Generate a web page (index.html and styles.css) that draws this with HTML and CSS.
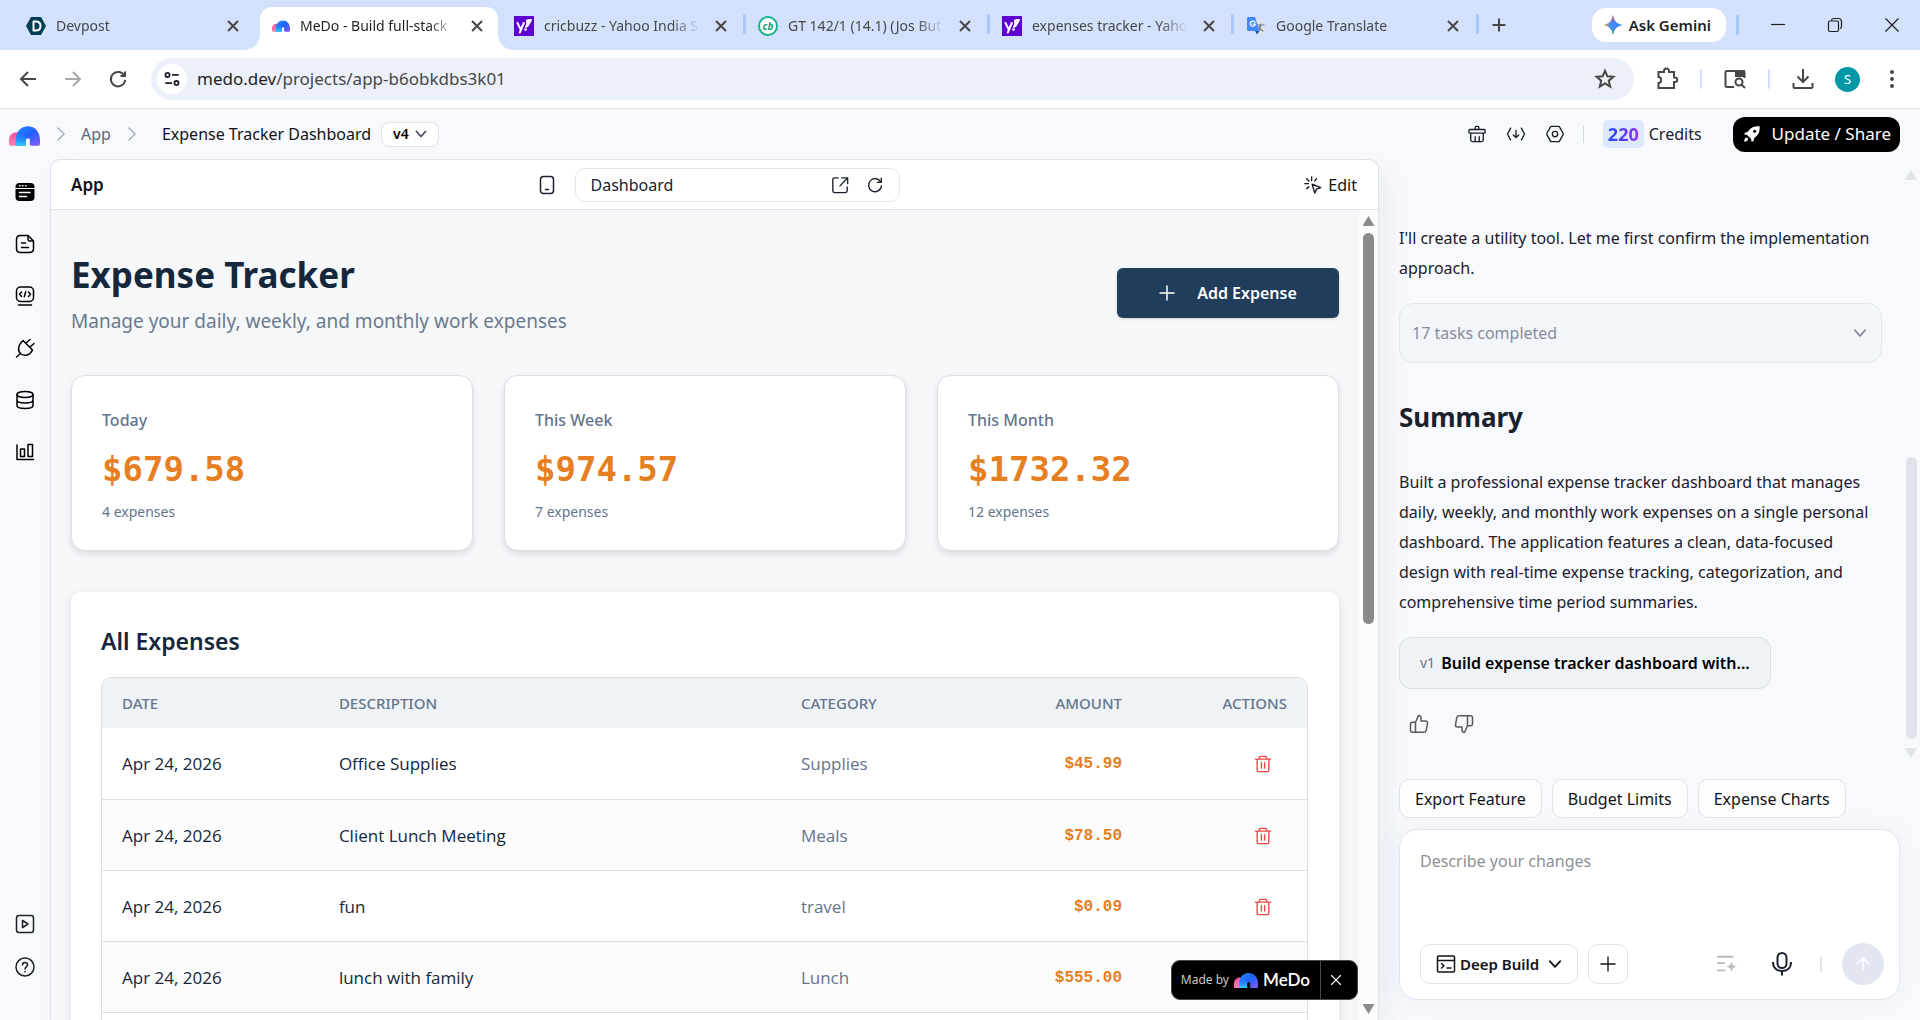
FILE: index.html
```html
<!DOCTYPE html>
<html lang="en">
<head>
<meta charset="utf-8">
<title>MeDo - Build full-stack apps</title>
<link rel="stylesheet" href="styles.css">
</head>
<body>
<svg class="defs" aria-hidden="true">
  <defs>
    <linearGradient id="pink" x1="0" y1="0" x2="0" y2="1"><stop offset="0" stop-color="#ff4fa0"/><stop offset="1" stop-color="#ff7fae"/></linearGradient>
    <linearGradient id="blue" x1="0" y1="0" x2="1" y2="1"><stop offset="0" stop-color="#2b8bff"/><stop offset=".5" stop-color="#1f62ff"/><stop offset="1" stop-color="#8a5af5"/></linearGradient>
    <linearGradient id="cyan" x1="0" y1="0" x2="0" y2="1"><stop offset="0" stop-color="#1c6dff" stop-opacity="0"/><stop offset="1" stop-color="#2fd4ff"/></linearGradient>
    <linearGradient id="gem" x1="0" y1="0" x2="1" y2="0"><stop offset="0" stop-color="#f9b800"/><stop offset=".35" stop-color="#4a8cf7"/><stop offset="1" stop-color="#3186ff"/></linearGradient>
    <linearGradient id="gemv" x1="0" y1="0" x2="0" y2="1"><stop offset="0" stop-color="#ee4d45"/><stop offset=".38" stop-color="#ee4d45" stop-opacity="0"/><stop offset=".62" stop-color="#27a54f" stop-opacity="0"/><stop offset="1" stop-color="#27a54f"/></linearGradient>
    <symbol id="medo" viewBox="0 0 32 20">
      <path d="M2 20c-1.500 0-2-.5-2-2v-3.500C0 9 3.500 6 8 6c3 0 5 2 5 5v9z" fill="url(#pink)"/>
      <path d="M7 20v-6C7 5.500 12.500 0 19.500 0S32 5.500 32 14v4c0 1.500-.5 2-2 2h-6.500c-1.500 0-2-.5-2-2v-4c0-1-.5-1.800-1.500-1.800s-2.500.8-2.500 1.800v6z" fill="url(#blue)"/>
      <path d="M7 20v-6c0-3.500 1-6.500 3-9 5 1 7.500 4.500 7.500 9v6z" fill="url(#cyan)"/>
    </symbol>
    <symbol id="x" viewBox="0 0 16 16"><path d="M3 3l10 10M13 3L3 13"/></symbol>
    <symbol id="yahoo" viewBox="0 0 20 20"><path d="M0 0h20v20H0z" fill="#5f01d1"/><path d="M3.500 7l3.200 6.500M9.800 7L5.800 16.500M12 11l2.700-7M13 4.500l4-.5-3.500 6z" fill="none" stroke="#fff" stroke-width="2"/><circle cx="11.500" cy="13.500" r="1.300" fill="#fff"/></symbol>
    <symbol id="trash" viewBox="0 0 20 20"><path d="M1.500 4.500h17M3.500 4.500V17c0 1 .6 1.500 1.500 1.500h10c1 0 1.500-.6 1.500-1.500V4.500M6 4.500V2.500c0-.6.400-1 1-1h6c.6 0 1 .4 1 1v2M8.200 8.500v6M11.800 8.500v6"/></symbol>
    <symbol id="down" viewBox="0 0 12 12"><path d="M1.500 3.500L6 8.500l4.500-5"/></symbol>
    <symbol id="reload" viewBox="0 0 20 20"><path d="M16.500 7A7.200 7.200 0 1 0 17.200 11M17 2.500V7h-4.500"/></symbol>
  </defs>
</svg>

<header class="browser">
  <div class="tabstrip">
    <nav class="tabs" aria-label="Tabs">
      <div class="tab"><svg class="fav" viewBox="0 0 20 20"><path d="M5 1h10l5 9-5 9H5l-5-9z" fill="#003e54"/><path d="M7.500 5.500h2.500c3 0 4.500 1.800 4.500 4.500s-1.500 4.500-4.500 4.500H7.500z" fill="none" stroke="#fff" stroke-width="2"/></svg><span class="tab-title">Devpost</span><button class="ic bold" aria-label="Close tab"><svg class="s16"><use href="#x"/></svg></button></div>
      <div class="tab active"><svg class="fav medofav"><use href="#medo"/></svg><span class="tab-title">MeDo - Build full-stack</span><button class="ic bold" aria-label="Close tab"><svg class="s16"><use href="#x"/></svg></button></div>
      <div class="tab"><svg class="fav"><use href="#yahoo"/></svg><span class="tab-title">cricbuzz - Yahoo India S</span><button class="ic bold" aria-label="Close tab"><svg class="s16"><use href="#x"/></svg></button></div>
      <div class="tab sep"><span class="cb">cb</span><span class="tab-title">GT 142/1 (14.1) (Jos But</span><button class="ic bold" aria-label="Close tab"><svg class="s16"><use href="#x"/></svg></button></div>
      <div class="tab sep"><svg class="fav"><use href="#yahoo"/></svg><span class="tab-title">expenses tracker - Yaho</span><button class="ic bold" aria-label="Close tab"><svg class="s16"><use href="#x"/></svg></button></div>
      <div class="tab sep end"><svg class="fav" viewBox="0 0 20 20"><path d="M8 5h9.500c1 0 1.500.5 1.500 1.500v11c0 .8-.5 1.500-1.500 1.500H13z" fill="#dcdfe3"/><path d="M11 9h7M14.500 8v1c0 3-1.500 5-3 6M13 11c1 2 2.500 3.500 4 4" fill="none" stroke="#6b7a8f" stroke-width="1.200"/><path d="M2.500 1H9l4.500 14H2.500C1.500 15 1 14.500 1 13.500v-11C1 1.500 1.500 1 2.500 1z" fill="#4688f4"/><path d="M9 15h4.500L11 18.500z" fill="#2250b5"/><path d="M9 6.200A2.600 2.600 0 1 0 9.400 8.200H7" fill="none" stroke="#fff" stroke-width="1.300"/></svg><span class="tab-title">Google Translate</span><button class="ic bold" aria-label="Close tab"><svg class="s16"><use href="#x"/></svg></button></div>
    </nav>
    <button class="ic newtab" aria-label="New tab"><svg class="s16" viewBox="0 0 16 16"><path d="M8 1.500v13M1.500 8h13"/></svg></button>
    <button class="gemini"><svg class="s20" viewBox="0 0 20 20"><path d="M10 0c1 6 4 9 10 10-6 1-9 4-10 10C9 14 6 11 0 10 6 9 9 6 10 0z" fill="url(#gem)"/><path d="M10 0c1 6 4 9 10 10-6 1-9 4-10 10C9 14 6 11 0 10 6 9 9 6 10 0z" fill="url(#gemv)"/></svg>Ask Gemini</button>
    <span class="vsep strong"></span>
    <div class="winctl">
      <button class="ic thin" aria-label="Minimise"><svg class="s16" viewBox="0 0 16 16"><path d="M1 7.500h14"/></svg></button>
      <button class="ic thin" aria-label="Restore"><svg class="s16" viewBox="0 0 16 16"><rect x="1.500" y="4" width="10" height="10.500" rx="1.500"/><path d="M4.500 3.500c0-1.200.8-2 2-2h5c1.800 0 3 1.200 3 3v5c0 1-.6 2-1.600 2"/></svg></button>
      <button class="ic thin" aria-label="Close window"><svg class="s16" viewBox="0 0 16 16"><path d="M1.500 1.500l13 13M14.500 1.500l-13 13"/></svg></button>
    </div>
  </div>
  <div class="toolbar">
    <div class="navbtns">
      <button class="ic" aria-label="Back"><svg class="s20" viewBox="0 0 20 20"><path d="M18 10H3M10 3l-7 7 7 7"/></svg></button>
      <button class="ic off" aria-label="Forward"><svg class="s20" viewBox="0 0 20 20"><path d="M2 10h15M10 3l7 7-7 7"/></svg></button>
      <button class="ic" aria-label="Reload"><svg class="s20"><use href="#reload"/></svg></button>
    </div>
    <div class="omnibox">
      <button class="siteinfo" aria-label="Site information"><svg class="s20" viewBox="0 0 20 20"><circle cx="5" cy="5.500" r="2.300"/><path d="M10 5.500h7.500M2.500 14.500H10"/><circle cx="15" cy="14.500" r="2.300"/></svg></button>
      <p class="url">medo.dev<span>/projects/app-b6obkdbs3k01</span></p>
      <button class="ic" aria-label="Bookmark"><svg class="s20" viewBox="0 0 20 20"><path d="M10 1.800l2.400 5.500 6 .5-4.600 3.900 1.400 5.900-5.200-3.200-5.200 3.200 1.400-5.900L1.600 7.800l6-.5z"/></svg></button>
    </div>
    <div class="exts">
      <button class="ic" aria-label="Extensions"><svg class="s22" viewBox="0 0 22 22"><path d="M2.500 4H8V3a2 2 0 0 1 5 0v1h5v5.500h1a2 2 0 0 1 0 4.500h-1v6H2.500v-5c3.500 0 3.500-6 0-6z"/></svg></button>
      <span class="vsep"></span>
      <button class="ic" aria-label="Search with Lens"><svg class="s22" viewBox="0 0 22 22"><path d="M10 19H3c-1 0-1.500-.5-1.500-1.500v-13C1.500 3.500 2 3 3 3h16c1 0 1.500.5 1.500 1.500V10"/><path d="M12 3h8v5h-8z" fill="currentColor"/><circle cx="15" cy="14" r="3.500"/><path d="M17.500 16.500L21 20"/></svg></button>
      <span class="vsep"></span>
      <button class="ic" aria-label="Downloads"><svg class="s22" viewBox="0 0 22 22"><path d="M11 1v13M5.500 8.500L11 14l5.500-5.500M1.500 15v4c0 .6.400 1 1 1h17c.6 0 1-.4 1-1v-4"/></svg></button>
      <button class="avatar" aria-label="Profile">S</button>
      <button class="ic" aria-label="Menu"><svg class="s22" viewBox="0 0 22 22"><g fill="currentColor" stroke="none"><circle cx="11" cy="4" r="2"/><circle cx="11" cy="11" r="2"/><circle cx="11" cy="18" r="2"/></g></svg></button>
    </div>
  </div>
</header>

<header class="apphead">
  <a class="logo" href="#" aria-label="MeDo home"><svg class="logosvg"><use href="#medo"/></svg></a>
  <svg class="crumb" viewBox="0 0 8 14"><path d="M1 1l6 6-6 6"/></svg>
  <a class="crumblink" href="#">App</a>
  <svg class="crumb" viewBox="0 0 8 14"><path d="M1 1l6 6-6 6"/></svg>
  <span class="projname">Expense Tracker Dashboard</span>
  <button class="version">v4 <svg class="s12"><use href="#down"/></svg></button>
  <div class="headtools">
    <button class="ic dark" aria-label="Clean up"><svg class="s20" viewBox="0 0 20 20"><path d="M8 5V2.500c0-.6.400-1 1-1h2c.6 0 1 .4 1 1V5M2 5h16c.6 0 1 .4 1 1v2c0 .6-.4 1-1 1H2c-.6 0-1-.4-1-1V6c0-.6.400-1 1-1zM3 9v7.500c0 1.200.8 2 2 2h10c1.200 0 2-.8 2-2V9M8 13v5M12.500 13v5"/></svg></button>
    <button class="ic dark" aria-label="Download code"><svg class="s20" viewBox="0 0 20 20"><path d="M4 3.500L.5 10 4 16.500M16 3.500l3.500 6.500-3.500 6.500M10 6v7.500M7 11l3 3 3-3"/></svg></button>
    <button class="ic dark" aria-label="Settings"><svg class="s20" viewBox="0 0 20 20"><path d="M6 1.500h8c.5 0 .8.200 1 .6l4 7.100c.3.500.3 1 0 1.500l-4 7.200c-.2.400-.5.600-1 .6H6c-.5 0-.8-.2-1-.6l-4-7.200c-.3-.5-.3-1 0-1.500l4-7.100c.2-.4.500-.6 1-.6z"/><circle cx="10" cy="10" r="3"/></svg></button>
  </div>
  <span class="headsep"></span>
  <div class="credits"><span class="count"><b>220</b></span>Credits</div>
  <button class="share"><svg class="s18" viewBox="0 0 20 20"><path d="M18.500 1.500C12 1 8 3.500 5.500 7.500L2 8.500l-.5 2 3 .5 4.500 4.500.5 3 2-.5 1-3.500c4-2.500 6.500-6.500 6-13z" fill="#fff"/><path d="M2 15c1.500-2 4-1 3.500 1-.4 1.500-2 2.500-4 2.500 0-1.500 0-2.500.5-3.500z" fill="#fff"/><circle cx="13" cy="7" r="1.700" fill="#000"/></svg>Update / Share</button>
</header>

<div class="workspace">
  <nav class="rail" aria-label="Project">
    <button class="ic black" aria-label="Preview"><svg class="s20" viewBox="0 0 20 20"><rect x=".5" y="1" width="19" height="18" rx="4" fill="#000" stroke="none"/><path d="M.5 6.500h19" stroke="#f8f9fd" stroke-width="1"/><path d="M4.500 3.800h.5M7.500 3.800h.5M10.500 3.800h.5M4.500 10.500h10.500M4.500 14.500h7" stroke="#fff" stroke-width="1.500"/></svg></button>
    <button class="ic black" aria-label="Docs"><svg class="s20" viewBox="0 0 20 20"><path d="M13 1.500H5.500c-2.500 0-4 1.500-4 4v9c0 2.500 1.500 4 4 4h9c2.500 0 4-1.500 4-4V7zM13 1.500V5c0 1.300.7 2 2 2h3.500M6.500 9h4M6.500 13.500h7"/></svg></button>
    <button class="ic black" aria-label="Code"><svg class="s20" viewBox="0 0 20 20"><rect x="1.500" y="1" width="17" height="14.500" rx="4"/><path d="M6.500 6L4.500 8.300l2 2.200M13.500 6l2 2.300-2 2.200M10.700 5.800L9.300 10.700M3.500 19h13"/></svg></button>
    <button class="ic black" aria-label="Plugins"><svg class="s20" viewBox="0 0 20 20"><path d="M8 2.500L17.500 12c-2.500 5.500-8 6.500-11.500 4s-3.500-8.500 2-13.500zM11 5l4-3.500M15 9l4-3.500M5.500 15.500L1.500 19"/></svg></button>
    <button class="ic black" aria-label="Database"><svg class="s20" viewBox="0 0 20 20"><ellipse cx="10" cy="4.500" rx="8" ry="3"/><path d="M2 4.500v11c0 1.700 3.500 3 8 3s8-1.300 8-3v-11M2 10c0 1.700 3.500 3 8 3s8-1.300 8-3"/></svg></button>
    <button class="ic black" aria-label="Analytics"><svg class="s20" viewBox="0 0 20 20"><path d="M2 3v14.500h16.500"/><rect x="5.500" y="7" width="4" height="7.500"/><rect x="13" y="2.500" width="4.500" height="12"/></svg></button>
    <button class="ic dark bottom" aria-label="Tutorials"><svg class="s20" viewBox="0 0 20 20"><rect x="1.500" y="1.500" width="17" height="17" rx="2.500"/><path d="M7.500 6.500l5.500 3.500-5.500 3.500z"/></svg></button>
    <button class="ic dark" aria-label="Help"><svg class="s20" viewBox="0 0 20 20"><circle cx="10" cy="10" r="9"/><path d="M7.500 8c0-3.300 5-3.300 5 0 0 2-2.500 1.800-2.500 4M10 14.500v.5"/></svg></button>
  </nav>

  <main class="preview">
    <div class="prevbar">
      <h2 class="prevname">App</h2>
      <div class="prevmid">
        <button class="ic dark" aria-label="Mobile view"><svg class="s20" viewBox="0 0 20 20"><rect x="3.500" y="1.500" width="13" height="17" rx="3"/><path d="M8.500 14.500h3"/></svg></button>
        <div class="pagebox">
          <span>Dashboard</span>
          <button class="ic dark" aria-label="Open in new tab"><svg class="s18" viewBox="0 0 20 20"><path d="M8 2H4C2.700 2 2 2.700 2 4v12.500c0 1.300.7 2 2 2h12c1.300 0 2-.7 2-2V12M12 2h6.500v6.500M18 2.500L10 11"/></svg></button>
          <button class="ic dark" aria-label="Refresh preview"><svg class="s18"><use href="#reload"/></svg></button>
        </div>
      </div>
      <button class="edit"><svg class="s18" viewBox="0 0 20 20"><path d="M9 9l9.500 4-4.500 1.500L12 19zM8.500 1v4M1 8.500h4M3 3l2.500 2.500M14 3l-2 2.500M3 14l2.500-2"/></svg>Edit</button>
    </div>
    <div class="prevbody">
      <section class="tracker">
        <div class="hero">
          <div>
            <h1>Expense Tracker</h1>
            <p class="sub">Manage your daily, weekly, and monthly work expenses</p>
          </div>
          <button class="add"><svg class="s16" viewBox="0 0 16 16"><path d="M8 1v14M1 8h14"/></svg>Add Expense</button>
        </div>
        <div class="cards">
          <article class="card"><h3>Today</h3><p class="sum">$679.58</p><p class="n">4 expenses</p></article>
          <article class="card"><h3>This Week</h3><p class="sum">$974.57</p><p class="n">7 expenses</p></article>
          <article class="card"><h3>This Month</h3><p class="sum">$1732.32</p><p class="n">12 expenses</p></article>
        </div>
        <section class="expenses">
          <h2>All Expenses</h2>
          <div class="tablewrap">
            <table>
              <colgroup><col class="c1"><col class="c2"><col class="c3"><col class="c4"><col class="c5"></colgroup>
              <thead><tr><th>DATE</th><th>DESCRIPTION</th><th>CATEGORY</th><th class="r">AMOUNT</th><th class="r">ACTIONS</th></tr></thead>
              <tbody>
                <tr><td>Apr 24, 2026</td><td>Office Supplies</td><td class="cat">Supplies</td><td class="amt">$45.99</td><td class="act"><button aria-label="Delete"><svg class="s18"><use href="#trash"/></svg></button></td></tr>
                <tr><td>Apr 24, 2026</td><td>Client Lunch Meeting</td><td class="cat">Meals</td><td class="amt">$78.50</td><td class="act"><button aria-label="Delete"><svg class="s18"><use href="#trash"/></svg></button></td></tr>
                <tr><td>Apr 24, 2026</td><td>fun</td><td class="cat">travel</td><td class="amt">$0.09</td><td class="act"><button aria-label="Delete"><svg class="s18"><use href="#trash"/></svg></button></td></tr>
                <tr><td>Apr 24, 2026</td><td>lunch with family</td><td class="cat">Lunch</td><td class="amt">$555.00</td><td class="act"><button aria-label="Delete"><svg class="s18"><use href="#trash"/></svg></button></td></tr>
                <tr class="last"><td></td><td></td><td></td><td></td><td></td></tr>
              </tbody>
            </table>
          </div>
        </section>
      </section>
      <div class="sbar" aria-hidden="true"><i class="up"></i><i class="thumb"></i><i class="dn"></i></div>
      <div class="madeby">
        <a href="#"><span>Made by</span><svg class="mb"><use href="#medo"/></svg><strong>MeDo</strong></a>
        <button aria-label="Dismiss"><svg class="s12" viewBox="0 0 16 16"><path d="M2 2l12 12M14 2L2 14"/></svg></button>
      </div>
    </div>
  </main>

  <aside class="chat">
    <div class="chatscroll">
      <div class="log">
        <p>I'll create a utility tool. Let me first confirm the implementation approach.</p>
        <button class="tasks">17 tasks completed<svg class="s14" viewBox="0 0 12 12"><path d="M1.500 3.500L6 8.500l4.500-5"/></svg></button>
        <h2>Summary</h2>
        <p>Built a professional expense tracker dashboard that manages daily, weekly, and monthly work expenses on a single personal dashboard. The application features a clean, data-focused design with real-time expense tracking, categorization, and comprehensive time period summaries.</p>
        <button class="build"><small>v1</small><b>Build expense tracker dashboard with...</b></button>
        <div class="votes">
          <button class="ic grey" aria-label="Good response"><svg class="s20" viewBox="0 0 20 20"><path d="M6.500 8.500L9 2.500c.5-1.500 3-1 3 1.200V7h4.500c1.500 0 2.300 1 2 2.400l-1.300 7c-.2 1.200-1 1.900-2.200 1.900H3.500c-1.200 0-2-.8-2-2v-6c0-1.200.8-2 2-2h3zM6.500 8.500v10"/></svg></button>
          <button class="ic grey" aria-label="Bad response"><svg class="s20" viewBox="0 0 20 20"><path d="M13.500 11.500L11 17.500c-.5 1.500-3 1-3-1.200V13H3.500c-1.500 0-2.300-1-2-2.400l1.300-7C3 2.400 3.800 1.700 5 1.700h11.500c1.200 0 2 .8 2 2v6c0 1.200-.8 2-2 2h-3zM13.500 11.500v-10"/></svg></button>
        </div>
      </div>
      <div class="sbar light" aria-hidden="true"><i class="up"></i><i class="thumb"></i><i class="dn"></i></div>
    </div>
    <div class="compose">
      <div class="chips"><button>Export Feature</button><button>Budget Limits</button><button>Expense Charts</button></div>
      <form class="box">
        <textarea aria-label="Describe your changes" placeholder="Describe your changes"></textarea>
        <div class="boxbar">
          <button type="button" class="mode"><svg class="s20" viewBox="0 0 20 20"><rect x="1.500" y="2" width="17" height="16" rx="1"/><path d="M1.500 6.500h17M5.500 9.500l2.500 2.200L5.500 14M11 14h4"/></svg>Deep Build<svg class="s14 caret" viewBox="0 0 12 12"><path d="M1.500 3.500L6 8.500l4.500-5"/></svg></button>
          <button type="button" class="plus" aria-label="Attach"><svg class="s16" viewBox="0 0 18 18"><path d="M9 1v16M1 9h16"/></svg></button>
          <button type="button" class="ic faint" aria-label="Enhance prompt"><svg class="s20" viewBox="0 0 22 22"><path d="M0 3h18M0 10h9M0 18h9"/><path d="M16 8c.7 4 2 5.300 6 6-4 .7-5.300 2-6 6-.7-4-2-5.300-6-6 4-.7 5.300-2 6-6z" fill="currentColor" stroke="none"/></svg></button>
          <button type="button" class="ic mic" aria-label="Voice input"><svg class="s24" viewBox="0 0 24 24"><rect x="7.500" y="1" width="9" height="15" rx="4.500"/><path d="M3 10c0 6 4 9 9 9s9-3 9-9M12 19v4.500"/></svg></button>
          <span class="boxsep"></span>
          <button type="submit" class="send" aria-label="Send"><svg class="s16" viewBox="0 0 20 20"><path d="M10 18V3M3 9.500L10 2.500l7 7"/></svg></button>
        </div>
      </form>
    </div>
  </aside>
</div>
</body>
</html>
```

FILE: styles.css
```css
* { box-sizing: border-box; margin: 0; padding: 0; }
body {
  height: 100vh;
  display: flex;
  flex-direction: column;
  overflow: hidden;
  background: #f8f9fd;
  color: #1a202c;
  font: 16px/24px "Noto Sans", "Open Sans", sans-serif;
}
button { font: inherit; color: inherit; background: none; border: 0; }
a { color: inherit; text-decoration: none; }
svg { display: block; flex: none; fill: none; stroke: currentColor; stroke-width: 1.5; stroke-linecap: round; stroke-linejoin: round; overflow: visible; }
.defs { position: absolute; width: 0; height: 0; }
.s12 { width: 12px; height: 12px; }
.s14 { width: 14px; height: 14px; }
.s16 { width: 16px; height: 16px; }
.s18 { width: 18px; height: 18px; }
.s20 { width: 20px; height: 20px; }
.s22 { width: 22px; height: 22px; }
.s24 { width: 24px; height: 24px; }
.ic { display: grid; place-items: center; color: #474747; }
.ic svg { stroke-width: 2; stroke-linecap: butt; stroke-linejoin: miter; }
.ic.dark svg, .ic.black svg, .ic.grey svg { stroke-width: 1.5; stroke-linecap: round; stroke-linejoin: round; }
.ic.dark { color: #1a202c; }
.ic.black { color: #000; }
.ic.grey { color: #57595e; }
.ic.off { color: #a8a8a8; }
.ic.thin { color: #1f1f1f; }
.ic.thin svg { stroke-width: 1.2; }

/* Browser frame */
.tabstrip { display: flex; align-items: center; height: 50px; padding-left: 16px; background: #d3e1fd; }
.tabs { display: flex; gap: 6px; align-self: stretch; padding-top: 7px; }
.tab {
  position: relative;
  display: flex;
  align-items: center;
  width: 238px;
  padding: 0 13px 6px 10px;
  color: #474747;
  font-size: 14px;
}
.tab.active { background: #fff; border-radius: 12px 12px 0 0; color: #1f1f1f; }
.tab.active::before, .tab.active::after {
  content: "";
  position: absolute;
  bottom: 0;
  width: 14px;
  height: 14px;
}
.tab.active::before { right: 100%; background: radial-gradient(circle at 0 0, transparent 13px, #fff 14px); }
.tab.active::after { left: 100%; background: radial-gradient(circle at 100% 0, transparent 13px, #fff 14px); }
.tab.sep::before, .tab.end::after {
  content: "";
  position: absolute;
  left: -5px;
  top: 7px;
  width: 3px;
  height: 20px;
  border-radius: 2px;
  background: #a8c7fa;
}
.tab.end::after { left: auto; right: -5px; }
.fav { width: 20px; height: 20px; stroke: none; }
.medofav { width: 18px; height: 14px; margin-left: 2px; }
.tab-title {
  flex: 1;
  min-width: 0;
  margin: 0 13px 0 10px;
  overflow: hidden;
  white-space: nowrap;
  -webkit-mask-image: linear-gradient(90deg, #000 82%, transparent);
  mask-image: linear-gradient(90deg, #000 82%, transparent);
}
.cb {
  display: grid;
  place-items: center;
  width: 20px;
  height: 20px;
  border: 2px solid #14b58a;
  border-radius: 50%;
  background: #fff;
  color: #14a07a;
  font: italic bold 10px/16px "Open Sans", sans-serif;
}
.newtab { margin-left: 17px; }
.gemini {
  display: flex;
  align-items: center;
  gap: 6px;
  height: 34px;
  margin-left: auto;
  padding: 0 15px 0 11px;
  border-radius: 14px;
  background: #fff;
  color: #1f1f1f;
  font-size: 15px;
  font-weight: 600;
}
.gemini svg { stroke: none; }
.vsep { width: 2px; height: 20px; margin: 0 1px; border-radius: 1px; background: #d3e1fd; }
.vsep.strong { width: 3px; margin: 0 0 0 10px; background: #a8c7fa; }
.winctl { display: flex; gap: 41px; padding: 0 20px 0 31px; }
.toolbar { display: flex; align-items: center; height: 59px; background: #fff; border-bottom: 1px solid #dfe1e5; }
.navbtns { display: flex; gap: 25px; padding: 0 23px 0 18px; }
.omnibox {
  flex: 1;
  display: flex;
  align-items: center;
  height: 42px;
  padding: 0 19px 0 6px;
  border-radius: 21px;
  background: #ecf0f9;
}
.siteinfo { display: grid; place-items: center; width: 30px; height: 30px; border-radius: 50%; background: #fff; }
.siteinfo svg { stroke-width: 2; stroke-linecap: butt; width: 18px; height: 18px; }
.url { flex: 1; margin-left: 10px; color: #1f1f1f; font-size: 17px; }
.url span { color: #474747; }
.exts { display: flex; align-items: center; gap: 21px; padding: 0 17px 0 22px; }
.avatar { width: 25px; height: 25px; border-radius: 50%; background: #0097a7; color: #fff; font-size: 13px; }

/* Application header */
.apphead { display: flex; align-items: center; height: 50px; padding: 0 20px 0 9px; }
.logosvg { width: 31px; height: 20px; stroke: none; margin-top: 4px; }
.crumb { width: 8px; height: 14px; margin: 0 16px 0 17px; color: #a7afbd; }
.crumblink { color: #5f6674; }
.crumb + .projname { margin: 0 10px; }
.projname { color: #10131a; }
.version {
  display: flex;
  align-items: center;
  gap: 6px;
  height: 25px;
  padding: 0 11px;
  border: 1px solid #dfe3ea;
  border-radius: 8px;
  background: #fff;
  color: #000;
  font-size: 14px;
  font-weight: 600;
}
.version svg { stroke-width: 1.8; color: #4a4f5a; }
.headtools { display: flex; gap: 21px; margin-left: auto; }
.headtools svg { width: 18px; height: 18px; stroke-width: 1.7; }
.headsep { width: 1px; height: 17px; margin: 0 19px; background: #d4d8e0; }
.credits { display: flex; align-items: center; gap: 5px; }
.count { padding: 2px 5px; border-radius: 5px; background: #dde8fd; font-size: 18px; }
.count b { background: linear-gradient(90deg, #1f4cff, #9a2df5); -webkit-background-clip: text; background-clip: text; color: transparent; }
.share {
  display: flex;
  align-items: center;
  gap: 11px;
  height: 35px;
  margin-left: 31px;
  padding: 0 9px 0 10px;
  border-radius: 12px;
  background: #000;
  color: #fff;
  font-size: 17px;
}
.share svg { stroke: none; }

/* Workspace */
.workspace { flex: 1; min-height: 0; display: flex; }
.rail { display: flex; flex-direction: column; align-items: center; gap: 32px; width: 50px; padding: 23px 0 43px; }
.rail .bottom { margin-top: auto; margin-bottom: -9px; }
.preview {
  flex: 1;
  min-width: 0;
  display: flex;
  flex-direction: column;
  border: 1px solid #dfe2ea;
  border-bottom: 0;
  border-radius: 10px 10px 0 0;
  background: #fff;
  box-shadow: 8px 10px 24px rgba(120, 150, 180, .12);
}
.prevbar { display: grid; grid-template-columns: 1fr auto 1fr; align-items: center; height: 50px; padding: 0 21px 0 20px; border-bottom: 1px solid #dfe2ea; }
.prevname { font-size: 17px; font-weight: 600; line-height: 24px; color: #10131a; }
.prevmid { display: flex; align-items: center; gap: 18px; margin-left: 8px; }
.pagebox {
  display: flex;
  align-items: center;
  gap: 17px;
  width: 325px;
  height: 34px;
  padding: 0 15px;
  border: 1px solid #e5e7ee;
  border-radius: 10px;
}
.pagebox span { flex: 1; }
.edit { justify-self: end; display: flex; align-items: center; gap: 6px; color: #10131a; }
.prevbody { position: relative; flex: 1; min-height: 0; display: flex; overflow: hidden; background: #f6f7f9; }
.tracker { flex: 1; padding: 35px 20px 0; color: #14273b; }
.hero { display: flex; justify-content: space-between; align-items: center; height: 96px; margin-bottom: 34px; }
.hero > div { align-self: flex-start; }
h1 { font-size: 35px; font-weight: 700; line-height: 60px; color: #14273b; }
.sub { font-size: 19px; line-height: 32px; color: #6a7a8e; }
.add {
  display: flex;
  align-items: center;
  justify-content: center;
  gap: 22px;
  width: 222px;
  height: 50px;
  border-radius: 6px;
  background: #203e5c;
  color: #fff;
  font-weight: 600;
  box-shadow: 0 1px 3px rgba(0, 0, 0, .15);
}
.cards { display: grid; grid-template-columns: repeat(3, 1fr); gap: 31px; margin-bottom: 41px; }
.card {
  height: 176px;
  padding: 29px 30px;
  border: 1px solid #dcdfe6;
  border-radius: 14px;
  background: #fff;
  box-shadow: 0 3px 6px rgba(20, 39, 59, .13);
}
.card h3 { font-size: 16px; font-weight: 500; line-height: 30px; color: #64748b; }
.sum { margin-top: 12px; font: bold 34px/44px "DejaVu Sans Mono", monospace; color: #e67e22; }
.n { margin-top: 7px; font-size: 14px; line-height: 28px; color: #64748b; }
.expenses { padding: 30px 31px 30px 30px; border-radius: 10px; background: #fff; box-shadow: 0 3px 8px rgba(20, 39, 59, .14); }
.expenses h2 { margin-bottom: 17px; font-size: 23px; font-weight: 600; line-height: 38px; color: #14273b; }
.tablewrap { border: 1px solid #dcdfe6; border-radius: 10px; overflow: hidden; }
table { width: 100%; table-layout: fixed; border-collapse: collapse; }
.c1 { width: 18%; }
.c5 { width: 165px; }
.c2 { width: 462px; }
.c4 { width: 170px; }
th { height: 50px; padding: 0 20px; background: #f0f3f6; color: #64748b; font-size: 15px; font-weight: 500; text-align: left; }
.r, .amt, .act { text-align: right; }
tbody tr { border-bottom: 1px solid #dcdfe6; }
tbody tr:nth-child(even) { background: #fcfcfc; }
td { height: 71px; padding: 2px 20px 0; font: 17px/24px "Open Sans", "Noto Sans", sans-serif; }
.cat { color: #64748b; }
.amt { font: bold 16px/24px "Liberation Mono", monospace; color: #e67e22; }
.act button { display: inline-grid; place-items: center; width: 48px; height: 40px; vertical-align: middle; color: #ef4444; }
.sbar { display: flex; flex-direction: column; align-items: center; width: 19px; padding: 6px 0; background: #fcfcfc; color: #8b8b8b; }
.sbar i { display: block; }
.up, .dn { width: 12px; height: 10px; background: currentColor; }
.up { clip-path: polygon(50% 0, 100% 100%, 0 100%); }
.dn { clip-path: polygon(0 0, 100% 0, 50% 100%); margin-top: auto; }
.sbar .thumb { width: 11px; height: 49%; margin-top: 7px; border-radius: 6px; background: currentColor; }
.madeby {
  position: absolute;
  right: 20px;
  bottom: 20px;
  display: flex;
  height: 40px;
  border: 1px solid #4a4a4a;
  border-radius: 9px;
  background: #000;
  color: #fff;
}
.madeby a { display: flex; align-items: center; gap: 5px; padding: 0 10px 0 9px; font-size: 12px; color: #c9c9c9; }
.madeby strong { color: #fff; font: 600 17px/20px "Lato", sans-serif; }
.madeby button { width: 37px; padding-right: 6px; display: grid; place-items: center; border-left: 1px solid #4a4a4a; }
.mb { width: 24px; height: 15px; stroke: none; }

/* Chat */
.chat { width: 541px; display: flex; flex-direction: column; }
.chatscroll { flex: 1; min-height: 0; display: flex; }
.log { flex: 1; padding: 64px 20px 0; overflow: hidden; }
.log p { line-height: 30px; }
.tasks {
  display: flex;
  align-items: center;
  justify-content: space-between;
  width: 100%;
  height: 60px;
  margin: 20px 0 35px;
  padding: 0 14px 0 12px;
  border: 1px solid #e3e6ec;
  border-radius: 14px;
  background: #f2f5fa;
  color: #858d9c;
}
.log h2 { margin-bottom: 31px; font-size: 26px; font-weight: 700; line-height: 38px; }
.build {
  display: flex;
  align-items: center;
  gap: 6px;
  height: 52px;
  margin-top: 20px;
  padding: 0 20px;
  border: 1px solid #d9dee6;
  border-radius: 12px;
  background: #eff2f7;
  color: #000;
}
.build small { font-size: 14px; color: #6b7280; }
.build b { font-weight: 600; }
.votes { display: flex; gap: 25px; padding: 25px 10px; }
.sbar.light { width: 18px; padding: 11px 0; background: none; color: #dfe3eb; }
.light .thumb { height: 48%; margin-top: auto; margin-bottom: 9px; }
.light .dn { margin-top: 0; }
.compose { padding: 10px 20px 20px; }
.chips { display: flex; gap: 10px; margin-bottom: 11px; }
.chips button { height: 39px; padding: 0 15px; border: 1px solid #dfe3ec; border-radius: 10px; background: #fdfdfe; color: #10131a; }
.box { display: flex; flex-direction: column; height: 171px; padding: 16px 15px 14px 20px; border: 1px solid #e0e6f0; border-radius: 19px; background: #fff; box-shadow: 0 0 24px rgba(90, 110, 150, .08); }
textarea { flex: 1; min-height: 0; border: 0; outline: 0; resize: none; background: none; font: inherit; line-height: 30px; }
textarea::placeholder { color: #8d9098; }
.boxbar { display: flex; align-items: center; }
.mode, .plus { display: flex; align-items: center; justify-content: center; height: 40px; border: 1px solid #dfe3ec; border-radius: 10px; color: #10131a; }
.mode { gap: 4px; padding: 0 15px; font-size: 15px; font-weight: 600; }
.mode .caret { margin-left: 5px; }
.plus { width: 40px; margin-left: 10px; }
.faint { margin-left: auto; color: #b9bbc1; }
.mic { margin-left: 33px; color: #1a202c; }
.boxsep { width: 2px; height: 15px; margin: 0 20px 0 26px; background: #dfe3ec; }
.send { display: grid; place-items: center; width: 42px; height: 42px; border-radius: 50%; background: #e2e6f0; color: #fff; }
.send svg { stroke-width: 1.8; }
```
